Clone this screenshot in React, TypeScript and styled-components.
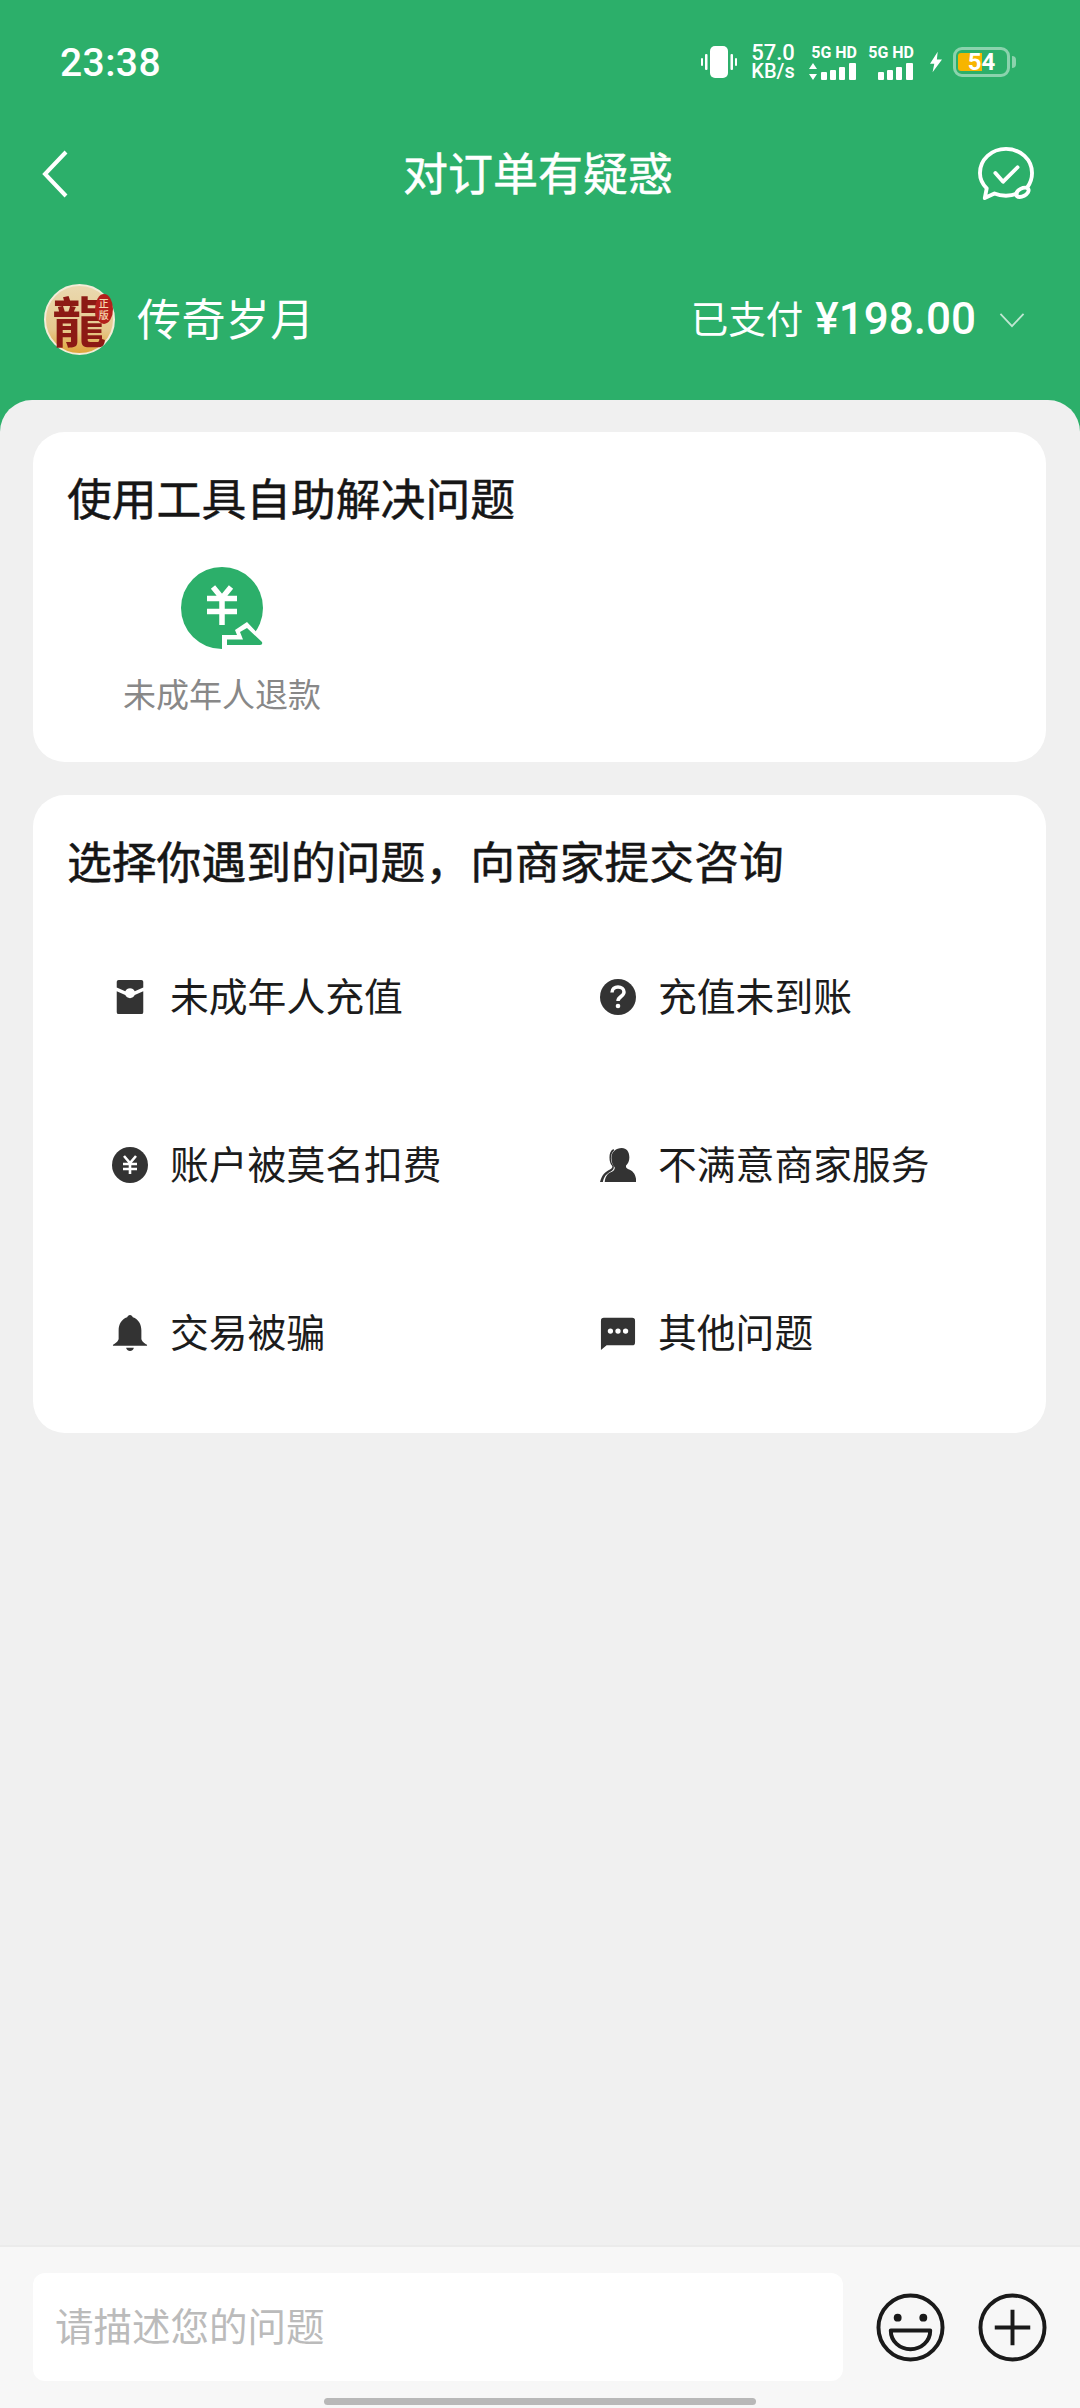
import styled, { createGlobalStyle } from "styled-components";

const GlobalStyle = createGlobalStyle`
  html, body {
    margin: 0;
    padding: 0;
    background: #2caf6a;
  }
  * {
    box-sizing: border-box;
  }
`;

const Page = styled.div`
  width: 1080px;
  height: 2408px;
  display: flex;
  flex-direction: column;
  background: #2caf6a;
  font-family: "Noto Sans CJK SC", "Noto Sans", sans-serif;
  overflow: hidden;
`;

const Header = styled.header`
  height: 400px;
  flex: none;
  color: #fff;
`;

const StatusBar = styled.div`
  height: 124px;
  padding: 0 70px 0 60px;
  display: flex;
  align-items: center;
  justify-content: space-between;
`;

const Time = styled.div`
  margin-top: 2px;
  font-family: Roboto, sans-serif;
  font-size: 39px;
  font-weight: 500;
  letter-spacing: 0.4px;
`;

const StatusIcons = styled.div`
  display: flex;
  align-items: center;
`;

const Speed = styled.div`
  width: 46px;
  margin: 0 13px;
  font-family: Roboto, sans-serif;
  font-weight: 500;
  text-align: center;
  line-height: 18px;
  white-space: nowrap;
  .num {
    font-size: 22px;
  }
  .unit {
    font-size: 20px;
  }
`;

const Sim = styled.div<{ $gap: number }>`
  width: 48px;
  margin-right: ${(p) => p.$gap}px;
  display: flex;
  flex-direction: column;
  align-items: flex-end;
  gap: 2px;
  font-family: Roboto, sans-serif;
  font-size: 16px;
  font-weight: 700;
  line-height: 16px;
  white-space: nowrap;
`;

const Battery = styled.div`
  position: relative;
  width: 57px;
  height: 30px;
  margin-left: 11px;
  border: 3px solid rgba(255, 255, 255, 0.45);
  border-radius: 9px;
  padding: 3px 2px;
  display: flex;
  align-items: stretch;
  &::after {
    content: "";
    position: absolute;
    right: -9px;
    top: 6px;
    width: 4px;
    height: 12px;
    border-radius: 0 4px 4px 0;
    background: rgba(255, 255, 255, 0.45);
  }
`;

const BatteryFill = styled.div`
  width: 24px;
  border-radius: 3px 0 0 3px;
  background: #f7b500;
`;

const BatteryText = styled.span`
  position: absolute;
  left: 0;
  right: 0;
  top: -3px;
  text-align: center;
  font-family: Roboto, sans-serif;
  font-size: 24px;
  font-weight: 700;
  line-height: 30px;
`;

const NavBar = styled.div`
  height: 100px;
  padding: 0 46px 0 42px;
  display: grid;
  grid-template-columns: 1fr auto 1fr;
  align-items: center;
  > svg:last-child {
    justify-self: end;
  }
`;

const NavTitle = styled.h1`
  margin: 0;
  padding-bottom: 5px;
  font-size: 45px;
  font-weight: 400;
  -webkit-text-stroke: 0.5px #fff;
  line-height: 60px;
`;

const OrderRow = styled.div`
  padding: 60px 55px 0 44px;
  display: flex;
  align-items: center;
  justify-content: space-between;
`;

const Buyer = styled.div`
  display: flex;
  align-items: center;
  gap: 22px;
  font-size: 44px;
  letter-spacing: 0.4px;
  > span {
    padding-bottom: 6px;
  }
`;

const Avatar = styled.div`
  position: relative;
  width: 71px;
  height: 71px;
  border: 2px solid #f3ecd8;
  border-radius: 50%;
  background: linear-gradient(180deg, #ead9b0 0%, #e6c98e 65%, #dfa63a 100%);
  display: flex;
  align-items: center;
  justify-content: center;
  color: #8c1a14;
  font-size: 54px;
  font-weight: 700;
  line-height: 67px;
`;

const Seal = styled.span`
  position: absolute;
  right: 0;
  top: 8px;
  width: 18px;
  height: 30px;
  border-radius: 50%;
  background: #b3201c;
  color: #f7d9b0;
  font-size: 10px;
  font-weight: 500;
  line-height: 12px;
  text-align: center;
  padding-top: 3px;
`;

const Paid = styled.div`
  display: flex;
  align-items: center;
  gap: 12px;
  font-size: 37.500px;
  > span:first-child {
    padding-bottom: 6px;
  }
  .amount {
    font-family: Roboto, sans-serif;
    font-size: 44px;
    font-weight: 500;
    margin-bottom: 2px;
  }
  svg {
    margin-left: 11px;
  }
`;

const Main = styled.main`
  flex: 1;
  background: #f0f0f0;
  border-radius: 32px 32px 0 0;
  padding: 32px 34px 0 33px;
  display: flex;
  flex-direction: column;
  gap: 33px;
`;

const Card = styled.section<{ $height: number }>`
  height: ${(p) => p.$height}px;
  background: #fff;
  border-radius: 32px;
  padding: 35px 0 0 34px;
`;

const CardTitle = styled.h2`
  margin: 0;
  font-size: 44.800px;
  font-weight: 400;
  -webkit-text-stroke: 0.5px #161616;
  line-height: 60px;
  color: #161616;
`;

const Tool = styled.div`
  width: 220px;
  margin: 39px 0 0 45px;
  display: flex;
  flex-direction: column;
  align-items: center;
  gap: 21px;
  font-size: 33px;
  line-height: 44px;
  color: #888;
`;

const IssueGrid = styled.div`
  margin: 23px 0 0 45px;
  display: grid;
  grid-template-columns: 488px 1fr;
  grid-auto-rows: 168px;
`;

const Issue = styled.div`
  display: flex;
  align-items: center;
  gap: 22px;
  font-size: 38.800px;
  color: #1c1c1c;
  svg {
    flex: none;
  }
  span {
    padding-bottom: 6px;
  }
`;

const InputBar = styled.footer`
  position: relative;
  flex: none;
  height: 163px;
  padding: 26px 33px 0;
  background: #f7f7f7;
  border-top: 2px solid #ebebeb;
  display: flex;
  align-items: flex-start;
`;

const Field = styled.div`
  width: 810px;
  height: 108px;
  padding: 0 0 6px 22px;
  background: #fff;
  border-radius: 12px;
  display: flex;
  align-items: center;
  color: #bbb;
  font-size: 38.500px;
`;

const InputActions = styled.div`
  margin: 20px 0 0 33px;
  display: flex;
  gap: 33px;
`;

const HomeBar = styled.div`
  position: absolute;
  left: 324px;
  bottom: 3px;
  width: 432px;
  height: 7px;
  border-radius: 4px;
  background: #b8b8b8;
`;

const Vibrate = () => (
  <svg width="36" height="32" viewBox="0 0 36 32" fill="#fff">
    <rect x="9" y="0" width="18" height="32" rx="5" />
    <rect x="4" y="8" width="2.500" height="16" rx="1" />
    <rect x="0" y="12" width="2" height="8" rx="1" />
    <rect x="29.500" y="8" width="2.500" height="16" rx="1" />
    <rect x="34" y="12" width="2" height="8" rx="1" />
  </svg>
);

const Signal = ({ arrows }: { arrows?: boolean }) => (
  <svg width="48" height="17" viewBox="0 0 48 17" fill="#fff">
    {arrows && <path d="M4 0 8 6H0ZM4 17 0 11H8Z" />}
    <rect x="12" y="9" width="6" height="8" rx="1" />
    <rect x="21" y="7" width="6" height="10" rx="1" />
    <rect x="30" y="4" width="6" height="13" rx="1" />
    <rect x="40" y="0" width="7" height="17" rx="1" />
  </svg>
);

const Bolt = () => (
  <svg width="12" height="22" viewBox="0 0 14 24" fill="#fff">
    <path d="M9 0 0 14h5l-2 10 11-15H8z" />
  </svg>
);

const BackIcon = () => (
  <svg width="26" height="48" viewBox="0 0 26 48" fill="none" stroke="#fff" strokeWidth="4">
    <path d="M24 2 3 24l21 22" />
  </svg>
);

const ChatCheck = () => (
  <svg width="56" height="54" viewBox="0 0 58 56" fill="none" stroke="#fff" strokeWidth="4" strokeLinecap="round" strokeLinejoin="round">
    <path d="M40 48.500c-3 1.200-7 2-11 2-5 0-9-1-12-2.300L7 53l2-10C4.500 38.500 2 33 2 27 2 13 14 2 29 2s27 11 27 25c0 6-2 11-5 15" />
    <path d="M18 27l8 9 15-15" />
    <ellipse cx="46" cy="47" rx="7" ry="4" transform="rotate(-28 46 47)" />
  </svg>
);

const DownIcon = () => (
  <svg width="26" height="16" viewBox="0 0 28 18" fill="none" stroke="rgba(255,255,255,0.7)" strokeWidth="2">
    <path d="M1 2l13 14L27 2" />
  </svg>
);

const RefundIcon = () => (
  <svg width="84" height="84" viewBox="0 0 84 84">
    <circle cx="42" cy="42" r="41" fill="#2caf6a" />
    <path
      d="M33 21l9 11 9-11M27 32.500h30M27 45.500h30M42 32v27"
      fill="none"
      stroke="#fff"
      strokeWidth="5.500"
    />
    <path d="M42 84V69H57L55 64 67 56 84 74V84Z" fill="#fff" />
    <path d="M47 79V73.500H63L60 66 67 62 82 76Q83 79 80 79Z" fill="#2caf6a" />
  </svg>
);

const EnvelopeIcon = () => (
  <svg width="36" height="36" viewBox="0 0 38 38" fill="#333">
    <path d="M7 1h24a2 2 0 0 1 2 2v6l-9 4a5.500 5.500 0 0 0-10 0L5 9V3a2 2 0 0 1 2-2z" />
    <path d="M5 13l9 4a5.500 5.500 0 0 0 10 0l9-4v22a2 2 0 0 1-2 2H7a2 2 0 0 1-2-2z" />
  </svg>
);

const QuestionIcon = () => (
  <svg width="36" height="36" viewBox="1 1 36 36">
    <circle cx="19" cy="19" r="18" fill="#333" />
    <path d="M13 14.500c0-3.500 2.700-5.500 6-5.500s6 2 6 5c0 4.500-6 4.500-6 9" fill="none" stroke="#fff" strokeWidth="3.500" />
    <circle cx="19" cy="28" r="2.300" fill="#fff" />
  </svg>
);

const YenIcon = () => (
  <svg width="36" height="36" viewBox="1 1 36 36">
    <circle cx="19" cy="19" r="18" fill="#333" />
    <path d="M13 10l6 7 6-7M12 18h14M12 23h14M19 17v11" fill="none" stroke="#fff" strokeWidth="2.600" />
  </svg>
);

const PersonIcon = () => (
  <svg width="36" height="36" viewBox="0 0 38 38" fill="#333">
    <path d="M23 1c5 0 8 4 8 10 0 4-1.500 6.500-3.500 8.500-.5 2 .5 3 2.500 4 4 1.500 7 4 8 10v3.500H5c.5-6 3-9 7-10.500 2-1 4-2.500 3.500-5-2-2-3.500-6-3.500-10C12 5 17 1 23 1z" />
    <path d="M14 2c-3 2-4 5-4 9s1 7 3 9c.3 2-1 3-3 4-4 2-8 5-10 13h3c1-6 4-9 8-11 3-1.500 4-3.500 3.500-6-2-2-3-5-3-8 0-3 1-6 3.500-8.500z" />
  </svg>
);

const BellIcon = () => (
  <svg width="36" height="36" viewBox="0 0 38 38" fill="#333">
    <path d="M19 0c1.500 0 2.500 1 3 2.500C28 4.500 31 10 31 16v9c0 2 3 5 6 6.500v1H1v-1c3-1.500 6-4.500 6-6.500v-9C7 10 10 4.500 16 2.500 16.500 1 17.500 0 19 0z" />
    <path d="M15 34.500h8c0 2-2 3.500-4 3.500s-4-1.500-4-3.500z" />
  </svg>
);

const DotsIcon = () => (
  <svg width="36" height="36" viewBox="0 0 38 38">
    <path d="M4 3h30a3 3 0 0 1 3 3v23a3 3 0 0 1-3 3H7l-6 5V6a3 3 0 0 1 3-3z" fill="#333" />
    <circle cx="11" cy="17" r="2.800" fill="#fff" />
    <circle cx="19" cy="17" r="2.800" fill="#fff" />
    <circle cx="27" cy="17" r="2.800" fill="#fff" />
  </svg>
);

const SmileIcon = () => (
  <svg width="69" height="69" viewBox="0 0 70 70" fill="none" stroke="#1a1a1a">
    <circle cx="35" cy="35" r="32.500" strokeWidth="4" />
    <circle cx="22" cy="25" r="4" fill="#1a1a1a" stroke="none" />
    <circle cx="48" cy="25" r="4" fill="#1a1a1a" stroke="none" />
    <path d="M15 38h40c0 11-9 19-20 19S15 49 15 38z" strokeWidth="4" strokeLinejoin="round" />
  </svg>
);

const PlusIcon = () => (
  <svg width="69" height="69" viewBox="0 0 70 70" fill="none" stroke="#1a1a1a" strokeWidth="4">
    <circle cx="35" cy="35" r="32.500" />
    <path d="M17 35h36M35 17v36" />
  </svg>
);

const issues = [
  { label: "未成年人充值", icon: <EnvelopeIcon /> },
  { label: "充值未到账", icon: <QuestionIcon /> },
  { label: "账户被莫名扣费", icon: <YenIcon /> },
  { label: "不满意商家服务", icon: <PersonIcon /> },
  { label: "交易被骗", icon: <BellIcon /> },
  { label: "其他问题", icon: <DotsIcon /> },
];

export default function App() {
  return (
    <>
      <GlobalStyle />
      <Page>
        <Header>
          <StatusBar>
            <Time>23:38</Time>
            <StatusIcons>
              <Vibrate />
              <Speed>
                <div className="num">57.0</div>
                <div className="unit">KB/s</div>
              </Speed>
              <Sim $gap={9}>
                <span>5G HD</span>
                <Signal arrows />
              </Sim>
              <Sim $gap={16}>
                <span>5G HD</span>
                <Signal />
              </Sim>
              <Bolt />
              <Battery>
                <BatteryFill />
                <BatteryText>54</BatteryText>
              </Battery>
            </StatusIcons>
          </StatusBar>
          <NavBar>
            <BackIcon />
            <NavTitle>对订单有疑惑</NavTitle>
            <ChatCheck />
          </NavBar>
          <OrderRow>
            <Buyer>
              <Avatar>
                龍<Seal>正版</Seal>
              </Avatar>
              <span>传奇岁月</span>
            </Buyer>
            <Paid>
              <span>已支付</span>
              <span className="amount">¥198.00</span>
              <DownIcon />
            </Paid>
          </OrderRow>
        </Header>
        <Main>
          <Card $height={330}>
            <CardTitle>使用工具自助解决问题</CardTitle>
            <Tool>
              <RefundIcon />
              未成年人退款
            </Tool>
          </Card>
          <Card $height={638}>
            <CardTitle>选择你遇到的问题，向商家提交咨询</CardTitle>
            <IssueGrid>
              {issues.map((item) => (
                <Issue key={item.label}>
                  {item.icon}
                  <span>{item.label}</span>
                </Issue>
              ))}
            </IssueGrid>
          </Card>
        </Main>
        <InputBar>
          <Field>请描述您的问题</Field>
          <InputActions>
            <SmileIcon />
            <PlusIcon />
          </InputActions>
          <HomeBar />
        </InputBar>
      </Page>
    </>
  );
}
